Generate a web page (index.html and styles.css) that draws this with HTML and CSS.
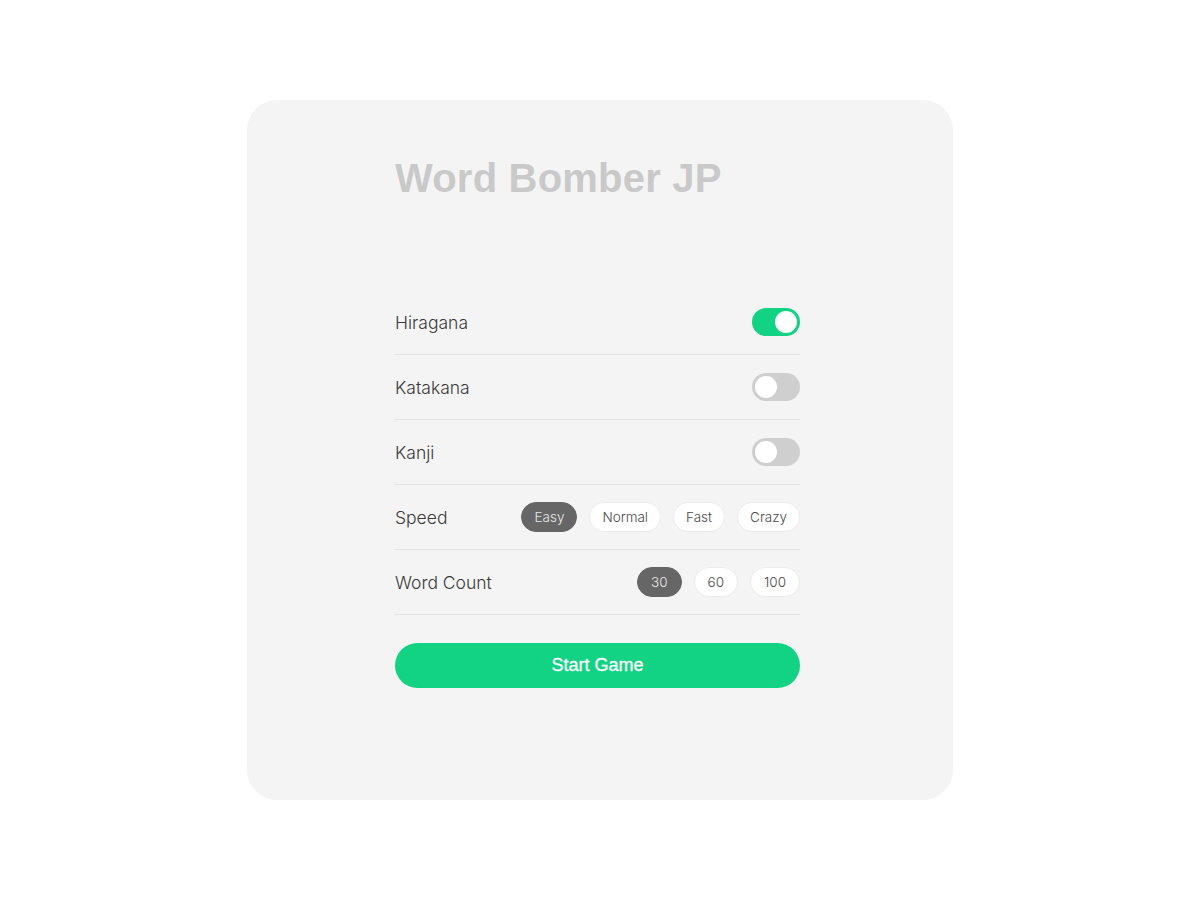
FILE: index.html
```html
<!DOCTYPE html>
<html lang="en">
<head>
<meta charset="utf-8">
<title>Word Bomber JP</title>
<link rel="stylesheet" href="styles.css">
</head>
<body>
<main class="card">
  <div class="content">
    <h1 class="title">Word Bomber JP</h1>
    <div class="settings">
      <div class="row">
        <span class="label">Hiragana</span>
        <span class="toggle on"><span class="knob"></span></span>
      </div>
      <div class="row">
        <span class="label">Katakana</span>
        <span class="toggle"><span class="knob"></span></span>
      </div>
      <div class="row">
        <span class="label">Kanji</span>
        <span class="toggle"><span class="knob"></span></span>
      </div>
      <div class="row">
        <span class="label">Speed</span>
        <div class="chips">
          <span class="chip active">Easy</span>
          <span class="chip">Normal</span>
          <span class="chip">Fast</span>
          <span class="chip">Crazy</span>
        </div>
      </div>
      <div class="row">
        <span class="label">Word Count</span>
        <div class="chips">
          <span class="chip num active">30</span>
          <span class="chip num">60</span>
          <span class="chip num">100</span>
        </div>
      </div>
    </div>
    <button class="start">Start Game</button>
  </div>
</main>
</body>
</html>
```

FILE: styles.css
```css
* { box-sizing: border-box; }
html, body { margin: 0; padding: 0; background: #ffffff; }
body {
  font-family: Inter, "Noto Sans", sans-serif;
  padding-top: 100px;
}
.card {
  width: 706px;
  height: 700px;
  margin: 0 auto;
  background: #f4f4f4;
  border-radius: 30px;
  padding: 54px 0 0 148px;
}
.content {
  width: 405px;
}
.title {
  margin: 0 0 88px 0;
  font-family: "Liberation Sans", Arial, sans-serif;
  font-weight: 700;
  font-size: 40px;
  line-height: 48px;
  letter-spacing: 0.2px;
  color: #c9c9c9;
}
.settings {
  display: flex;
  flex-direction: column;
}
.row {
  height: 65px;
  display: flex;
  align-items: center;
  justify-content: space-between;
  border-bottom: 1px solid #e3e3e3;
}
.label {
  font-size: 17.5px;
  font-weight: 300;
  color: #3a3a3a;
}
.toggle {
  width: 48px;
  height: 28px;
  border-radius: 14px;
  background: #cfcfcf;
  display: flex;
  align-items: center;
  padding: 0 3px;
  justify-content: flex-start;
}
.toggle.on {
  background: #12d283;
  justify-content: flex-end;
}
.knob {
  width: 22px;
  height: 22px;
  border-radius: 50%;
  background: #ffffff;
}
.chips {
  display: flex;
  gap: 12px;
}
.chip {
  height: 30px;
  padding: 0 12px;
  border-radius: 15px;
  background: #ffffff;
  border: 1px solid #ececec;
  display: flex;
  align-items: center;
  font-size: 13.5px;
  font-weight: 300;
  color: #4a4a4a;
}
.chip.num {
  padding: 0 13px;
}
.chip.active {
  background: #666666;
  border-color: #666666;
  color: #e6e6e6;
}
.start {
  margin-top: 28px;
  width: 405px;
  height: 45px;
  border: none;
  border-radius: 23px;
  background: #11d383;
  color: #ffffff;
  font-family: "Liberation Sans", Arial, sans-serif;
  font-size: 18px;
  font-weight: 400;
  display: block;
  -webkit-text-stroke: 0.3px #ffffff;
}
```
